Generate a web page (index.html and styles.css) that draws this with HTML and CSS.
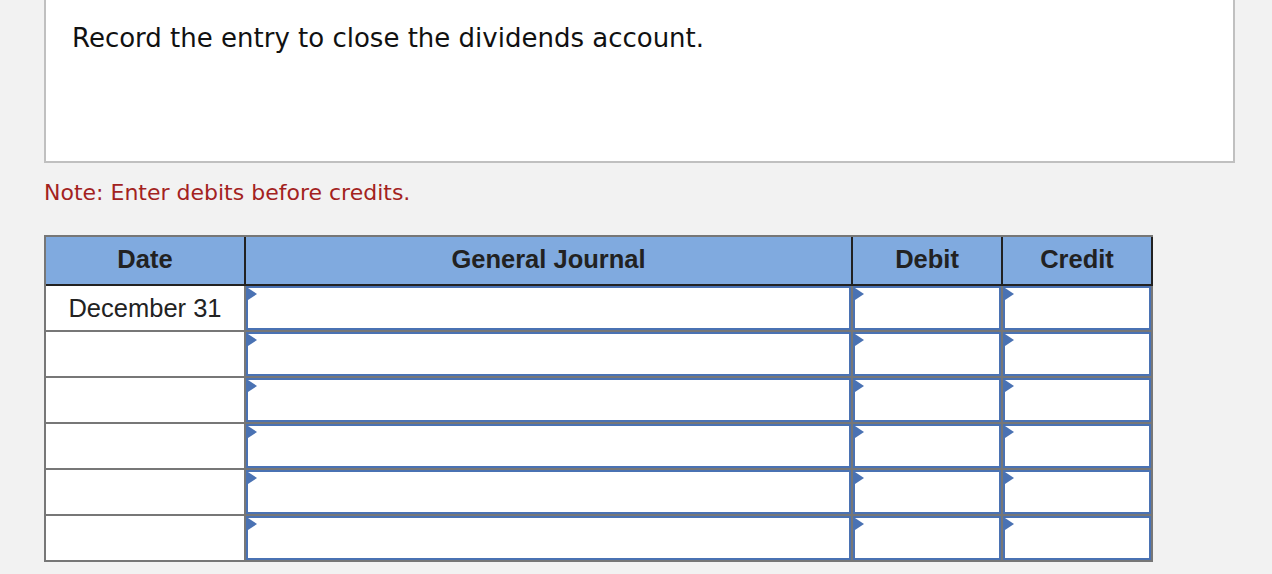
FILE: index.html
```html
<!doctype html>
<html>
<head>
  <title>Closing entry</title>
  <link rel="stylesheet" href="styles.css">
</head>
<body>
  <div class="page">
    <div class="question">Record the entry to close the dividends account.</div>
    <p class="note">Note: Enter debits before credits.</p>
    <div class="journal">
      <div class="th">Date</div>
      <div class="th">General Journal</div>
      <div class="th">Debit</div>
      <div class="th">Credit</div>

      <div class="td date">December 31</div>
      <div class="td"><span class="flag"></span><input type="text"></div>
      <div class="td"><span class="flag"></span><input type="text"></div>
      <div class="td"><span class="flag"></span><input type="text"></div>

      <div class="td date"></div>
      <div class="td"><span class="flag"></span><input type="text"></div>
      <div class="td"><span class="flag"></span><input type="text"></div>
      <div class="td"><span class="flag"></span><input type="text"></div>

      <div class="td date"></div>
      <div class="td"><span class="flag"></span><input type="text"></div>
      <div class="td"><span class="flag"></span><input type="text"></div>
      <div class="td"><span class="flag"></span><input type="text"></div>

      <div class="td date"></div>
      <div class="td"><span class="flag"></span><input type="text"></div>
      <div class="td"><span class="flag"></span><input type="text"></div>
      <div class="td"><span class="flag"></span><input type="text"></div>

      <div class="td date"></div>
      <div class="td"><span class="flag"></span><input type="text"></div>
      <div class="td"><span class="flag"></span><input type="text"></div>
      <div class="td"><span class="flag"></span><input type="text"></div>

      <div class="td date"></div>
      <div class="td"><span class="flag"></span><input type="text"></div>
      <div class="td"><span class="flag"></span><input type="text"></div>
      <div class="td"><span class="flag"></span><input type="text"></div>
    </div>
  </div>
</body>
</html>
```

FILE: styles.css
```css
body {
  margin: 0;
  background: #f2f2f2;
  font-family: "DejaVu Sans", Verdana, sans-serif;
}
.page {
  padding-left: 44px;
}
.question {
  box-sizing: border-box;
  width: 1191px;
  height: 163px;
  padding: 23px 26px 0;
  background: #fff;
  border: 2px solid #c0c0c0;
  border-top: none;
  font-size: 26px;
  line-height: 30px;
  color: #111;
}
.note {
  margin: 17px 0 0;
  font-size: 22px;
  line-height: 26px;
  color: #a3221e;
}
.journal {
  display: grid;
  grid-template-columns: 200px 607px 150px 150px;
  width: 1107px;
  margin-top: 29px;
  border-top: 2px solid #777;
  border-left: 2px solid #777;
  font-family: "Liberation Sans", Arial, sans-serif;
  font-size: 25.5px;
  color: #222;
}
.th, .td {
  box-sizing: border-box;
  border-right: 2px solid #777;
  border-bottom: 2px solid #777;
}
.th {
  display: flex;
  align-items: center;
  justify-content: center;
  height: 49px;
  padding-bottom: 3px;
  background: #80aadf;
  border-color: #222;
  font-weight: bold;
}
.td {
  position: relative;
  height: 46px;
  background: #fff;
}
.date {
  display: flex;
  align-items: center;
  justify-content: center;
}
.td input {
  display: block;
  box-sizing: border-box;
  width: 100%;
  height: 44px;
  margin: 0;
  padding: 0 10px;
  border: 2px solid #4a72b3;
  background: #fff;
  outline: none;
}
.flag {
  position: absolute;
  left: 2px;
  top: 2px;
  width: 0;
  height: 0;
  border-left: 9px solid #4a72b3;
  border-top: 6px solid transparent;
  border-bottom: 6px solid transparent;
}
```
